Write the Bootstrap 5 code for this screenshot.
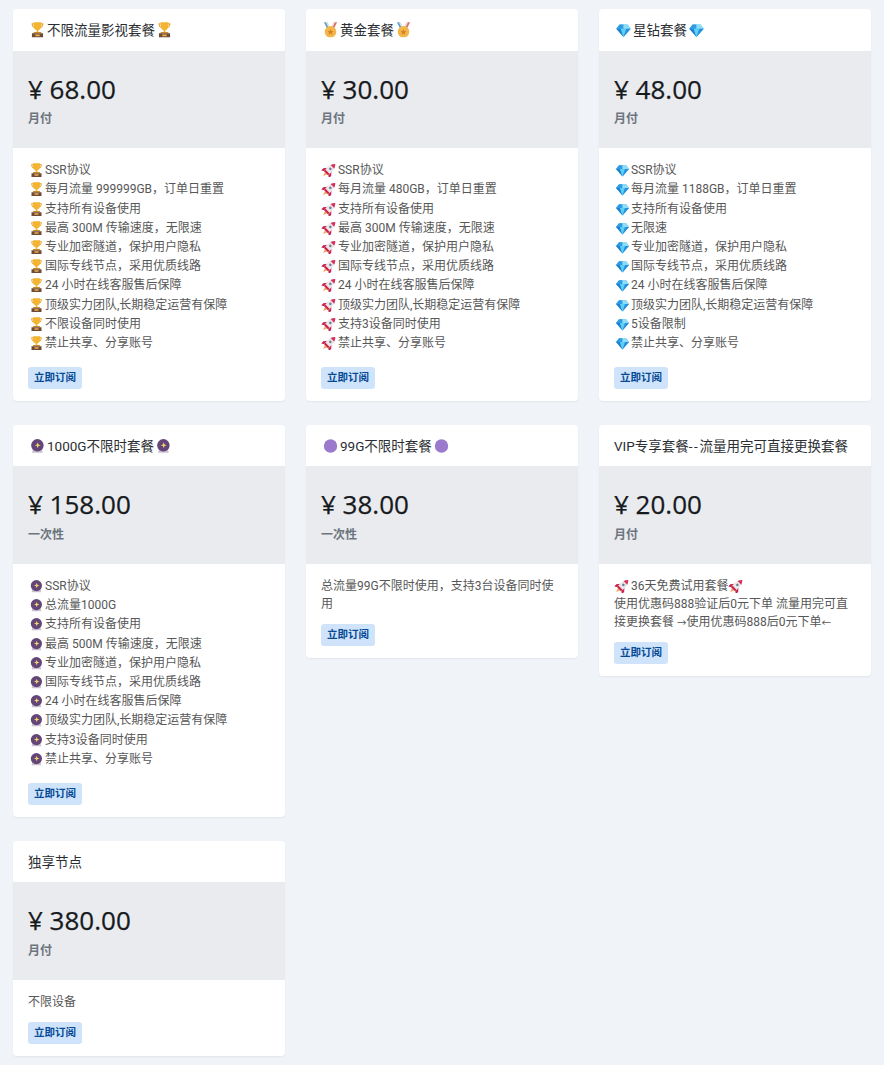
<!DOCTYPE html>
<html lang="zh-CN"><head><meta charset="utf-8"><title>套餐</title>
<link href="https://cdn.jsdelivr.net/npm/bootstrap@5.3.0/dist/css/bootstrap.min.css" rel="stylesheet">
<style>
html,body{background:#f0f3f8;}
body{font-family:Roboto,"Noto Sans CJK SC",sans-serif;font-size:12px;line-height:18px;color:#575757;}
.plan-wrap{padding:9px 13px 9px;}
.plan-row{--bs-gutter-x:21px;--bs-gutter-y:24px;}
.plan-card{border:0;border-radius:4px;background:#fff;box-shadow:0 1px 2px rgba(0,0,0,.06);overflow:hidden;}
.plan-head{background:#fff;border:0;height:41.5px;padding:1px 15px 0;font-size:13.5px;line-height:40.5px;color:#2b2f33;white-space:nowrap;}
.plan-price{background:#e9ebef;height:97.6px;padding:19px 15px 0;}
.price-num{font-family:"Open Sans","Noto Sans CJK SC",sans-serif;font-size:26px;line-height:38px;color:#171a1d;font-weight:500;-webkit-text-stroke:.25px #171a1d;}
.price-term{font-size:12px;line-height:19px;margin-top:2.6px;color:#6c757d;font-weight:600;}
.plan-body{padding:12px 15px;}
.plan-note{padding-top:1px;margin-bottom:11px;}
.plan-list{padding-top:1px;margin-bottom:13.7px;line-height:19.2px;}
.dash{letter-spacing:1.6px;}
.arrow-ch{font-size:9.5px;line-height:1;}
.sub-btn{display:inline-block;font-size:10.5px;font-weight:700;line-height:22px;height:22px;padding:0 6px;border:0;border-radius:3px;background:#cfe3fb;color:#054a94;vertical-align:top;}
.ic{width:17px;height:14px;vertical-align:-3px;display:inline-block;}
.plan-head .ic{width:19px;height:15.6px;vertical-align:-3px;}
</style></head><body>
<svg width="0" height="0" class="d-none" aria-hidden="true"><defs>
<symbol id="i-trophy" viewBox="0 0 17 14">
<path d="M3.200 1.200h2v1H4.200c.1 1.200.6 2 1.600 2.400l-.3.8C4 4.900 3.200 3.600 3.200 1.200zM13.800 1.200h-2v1h1c-.1 1.200-.6 2-1.600 2.400l.3.8c1.500-.5 2.300-1.800 2.300-4.200z" fill="#e8a021"/>
<path d="M5 .3h7v3.400c0 2-1.300 3.400-2.700 3.800v1.500H7.700V7.500C6.300 7.100 5 5.700 5 3.700z" fill="#f3b431"/>
<path d="M5.300 9h6.400l.6 1.200H4.700z" fill="#c98a2a"/>
<path d="M3.500 10.200h10V14h-10z" fill="#6f4a35"/>
<path d="M6.500 11.300h4v1.500h-4z" fill="#e8b04a"/>
</symbol>
<symbol id="i-medal" viewBox="0 0 17 14">
<path d="M2.600.3h2.800l3.100 5.700-2.300 1.400z" fill="#5a9fd0"/>
<path d="M14.400.3h-2.800L8.500 6l2.300 1.400z" fill="#d86a6a"/>
<path d="M4.300.3h1.100l3.100 5.600-1 .7zM12.700.3h-1.100L8.500 5.900l1 .7z" fill="#f0e4d0"/>
<circle cx="8.500" cy="8.800" r="5.200" fill="#f2b64a"/>
<path d="M8.500 6.200l.8 1.800 1.900.2-1.400 1.300.4 1.900-1.700-1-1.700 1 .4-1.900-1.400-1.300 1.900-.2z" fill="#d9802a"/>
</symbol>
<symbol id="i-gem" viewBox="0 0 17 14">
<path d="M5 2.200h7.200L15 6l-6.500 7.500L2 6z" fill="#4fc3f0"/>
<path d="M5 2.200h3.500V6H2z" fill="#2f9be0"/>
<path d="M12.200 2.200H8.500V6H15z" fill="#8fdcf7"/>
<path d="M2 6h4l2.500 7.500z" fill="#1f7fd0"/>
<path d="M6 6h5l-2.500 7.500z" fill="#5dd0f5"/>
<path d="M11 6h4l-6.500 7.500z" fill="#2a90de"/>
</symbol>
<symbol id="i-rocket" viewBox="0 0 17 14">
<g transform="translate(8.300 7) rotate(45)">
<path d="M-1.800 4h3.600L0 8.600z" fill="#f2a04a"/>
<path d="M-2.600-.5L-5.600 3l.3 3L-2.400 4zM2.600-.5L5.600 3l-.3 3L2.400 4z" fill="#c9224e"/>
<path d="M0-8.400C3.300-5.400 3.600-1 2.800 4.600H-2.800C-3.600-1-3.300-5.400 0-8.400z" fill="#ece6e8"/>
<path d="M0-8.400C1.300-7.200 2.100-5.800 2.600-4.400H-2.600C-2.100-5.800-1.300-7.200 0-8.400z" fill="#d8305c"/>
<path d="M-2.800 2.500h5.600l0 2.100h-5.600z" fill="#c9224e"/>
<circle cx="0" cy="-1.500" r="1.300" fill="#6a7f95"/>
</g>
</symbol>
<symbol id="i-ball" viewBox="0 0 17 14">
<path d="M4.600 9h7.600l1 4.200H3.600z" fill="#c9c1cf"/>
<circle cx="8.400" cy="6.600" r="5.600" fill="#634578"/>
<path d="M8.700 3.800l.7 2 2 .7-2 .7-.7 2-.7-2-2-.7 2-.7z" fill="#f2d96b"/>
</symbol>
<symbol id="i-dot" viewBox="0 0 19 15.600">
<circle cx="9.500" cy="8" r="6.700" fill="#9b79cc"/>
</symbol>
</defs></svg>

<div class="plan-wrap"><div class="row row-cols-3 plan-row align-items-start">

<div class="col"><div class="card plan-card">
<div class="card-header plan-head"><svg class="ic"><use href="#i-trophy"/></svg>不限流量影视套餐<svg class="ic"><use href="#i-trophy"/></svg></div>
<div class="plan-price"><div class="price-num">¥ 68.00</div><div class="price-term">月付</div></div>
<div class="card-body plan-body"><div class="plan-list">
<svg class="ic"><use href="#i-trophy"/></svg>SSR协议<br>
<svg class="ic"><use href="#i-trophy"/></svg>每月流量 999999GB，订单日重置<br>
<svg class="ic"><use href="#i-trophy"/></svg>支持所有设备使用<br>
<svg class="ic"><use href="#i-trophy"/></svg>最高 300M 传输速度，无限速<br>
<svg class="ic"><use href="#i-trophy"/></svg>专业加密隧道，保护用户隐私<br>
<svg class="ic"><use href="#i-trophy"/></svg>国际专线节点，采用优质线路<br>
<svg class="ic"><use href="#i-trophy"/></svg>24 小时在线客服售后保障<br>
<svg class="ic"><use href="#i-trophy"/></svg>顶级实力团队,长期稳定运营有保障<br>
<svg class="ic"><use href="#i-trophy"/></svg>不限设备同时使用<br>
<svg class="ic"><use href="#i-trophy"/></svg>禁止共享、分享账号
</div><button type="button" class="btn sub-btn">立即订阅</button></div>
</div></div>

<div class="col"><div class="card plan-card">
<div class="card-header plan-head"><svg class="ic"><use href="#i-medal"/></svg>黄金套餐<svg class="ic"><use href="#i-medal"/></svg></div>
<div class="plan-price"><div class="price-num">¥ 30.00</div><div class="price-term">月付</div></div>
<div class="card-body plan-body"><div class="plan-list">
<svg class="ic"><use href="#i-rocket"/></svg>SSR协议<br>
<svg class="ic"><use href="#i-rocket"/></svg>每月流量 480GB，订单日重置<br>
<svg class="ic"><use href="#i-rocket"/></svg>支持所有设备使用<br>
<svg class="ic"><use href="#i-rocket"/></svg>最高 300M 传输速度，无限速<br>
<svg class="ic"><use href="#i-rocket"/></svg>专业加密隧道，保护用户隐私<br>
<svg class="ic"><use href="#i-rocket"/></svg>国际专线节点，采用优质线路<br>
<svg class="ic"><use href="#i-rocket"/></svg>24 小时在线客服售后保障<br>
<svg class="ic"><use href="#i-rocket"/></svg>顶级实力团队,长期稳定运营有保障<br>
<svg class="ic"><use href="#i-rocket"/></svg>支持3设备同时使用<br>
<svg class="ic"><use href="#i-rocket"/></svg>禁止共享、分享账号
</div><button type="button" class="btn sub-btn">立即订阅</button></div>
</div></div>

<div class="col"><div class="card plan-card">
<div class="card-header plan-head"><svg class="ic"><use href="#i-gem"/></svg>星钻套餐<svg class="ic"><use href="#i-gem"/></svg></div>
<div class="plan-price"><div class="price-num">¥ 48.00</div><div class="price-term">月付</div></div>
<div class="card-body plan-body"><div class="plan-list">
<svg class="ic"><use href="#i-gem"/></svg>SSR协议<br>
<svg class="ic"><use href="#i-gem"/></svg>每月流量 1188GB，订单日重置<br>
<svg class="ic"><use href="#i-gem"/></svg>支持所有设备使用<br>
<svg class="ic"><use href="#i-gem"/></svg>无限速<br>
<svg class="ic"><use href="#i-gem"/></svg>专业加密隧道，保护用户隐私<br>
<svg class="ic"><use href="#i-gem"/></svg>国际专线节点，采用优质线路<br>
<svg class="ic"><use href="#i-gem"/></svg>24 小时在线客服售后保障<br>
<svg class="ic"><use href="#i-gem"/></svg>顶级实力团队,长期稳定运营有保障<br>
<svg class="ic"><use href="#i-gem"/></svg>5设备限制<br>
<svg class="ic"><use href="#i-gem"/></svg>禁止共享、分享账号
</div><button type="button" class="btn sub-btn">立即订阅</button></div>
</div></div>

<div class="col"><div class="card plan-card">
<div class="card-header plan-head"><svg class="ic"><use href="#i-ball"/></svg>1000G不限时套餐<svg class="ic"><use href="#i-ball"/></svg></div>
<div class="plan-price"><div class="price-num">¥ 158.00</div><div class="price-term">一次性</div></div>
<div class="card-body plan-body"><div class="plan-list">
<svg class="ic"><use href="#i-ball"/></svg>SSR协议<br>
<svg class="ic"><use href="#i-ball"/></svg>总流量1000G<br>
<svg class="ic"><use href="#i-ball"/></svg>支持所有设备使用<br>
<svg class="ic"><use href="#i-ball"/></svg>最高 500M 传输速度，无限速<br>
<svg class="ic"><use href="#i-ball"/></svg>专业加密隧道，保护用户隐私<br>
<svg class="ic"><use href="#i-ball"/></svg>国际专线节点，采用优质线路<br>
<svg class="ic"><use href="#i-ball"/></svg>24 小时在线客服售后保障<br>
<svg class="ic"><use href="#i-ball"/></svg>顶级实力团队,长期稳定运营有保障<br>
<svg class="ic"><use href="#i-ball"/></svg>支持3设备同时使用<br>
<svg class="ic"><use href="#i-ball"/></svg>禁止共享、分享账号
</div><button type="button" class="btn sub-btn">立即订阅</button></div>
</div></div>

<div class="col"><div class="card plan-card">
<div class="card-header plan-head"><svg class="ic"><use href="#i-dot"/></svg>99G不限时套餐<svg class="ic"><use href="#i-dot"/></svg></div>
<div class="plan-price"><div class="price-num">¥ 38.00</div><div class="price-term">一次性</div></div>
<div class="card-body plan-body"><div class="plan-note">总流量99G不限时使用，支持3台设备同时使用</div><button type="button" class="btn sub-btn">立即订阅</button></div>
</div></div>

<div class="col"><div class="card plan-card">
<div class="card-header plan-head">VIP专享套餐<span class="dash">--</span>流量用完可直接更换套餐</div>
<div class="plan-price"><div class="price-num">¥ 20.00</div><div class="price-term">月付</div></div>
<div class="card-body plan-body"><div class="plan-note"><svg class="ic"><use href="#i-rocket"/></svg>36天免费试用套餐<svg class="ic"><use href="#i-rocket"/></svg><br>使用优惠码888验证后0元下单 流量用完可直<br>接更换套餐 <span class="arrow-ch">→</span>使用优惠码888后0元下单<span class="arrow-ch">←</span></div><button type="button" class="btn sub-btn">立即订阅</button></div>
</div></div>

<div class="col"><div class="card plan-card">
<div class="card-header plan-head">独享节点</div>
<div class="plan-price"><div class="price-num">¥ 380.00</div><div class="price-term">月付</div></div>
<div class="card-body plan-body"><div class="plan-note">不限设备</div><button type="button" class="btn sub-btn">立即订阅</button></div>
</div></div>

</div></div>
<script src="https://cdn.jsdelivr.net/npm/bootstrap@5.3.0/dist/js/bootstrap.bundle.min.js"></script>
</body></html>
